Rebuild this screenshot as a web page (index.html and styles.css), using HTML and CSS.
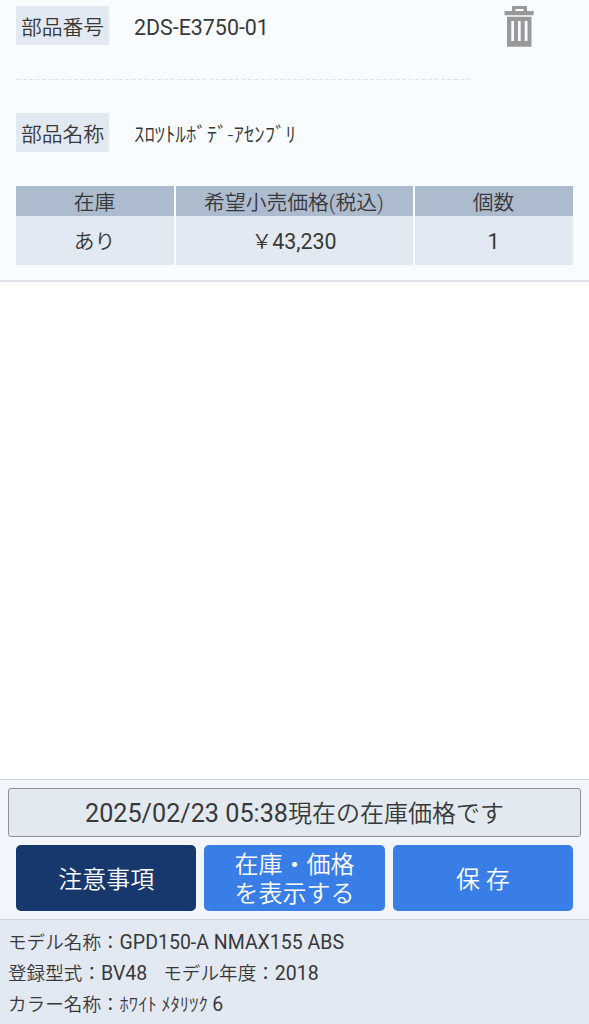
FILE: index.html
```html
<!DOCTYPE html>
<html lang="ja">
<head>
    <meta charset="UTF-8">
    <meta name="viewport" content="width=device-width, initial-scale=1.0">
    <title>部品情報</title>
    <link rel="stylesheet" href="styles.css">
</head>
<body>
    <div class="part">
        <div class="part-head">
            <div class="part-info">
                <div class="row">
                    <span class="label">部品番号</span>
                    <span class="number">2DS-E3750-01</span>
                </div>
                <svg class="dash" width="455" height="1"><path d="M0 .5H455"/></svg>
                <div class="row">
                    <span class="label">部品名称</span>
                    <span class="kana">ｽﾛﾂﾄﾙﾎﾞﾃﾞ-ｱｾﾝﾌﾞﾘ</span>
                </div>
            </div>
            <button class="delete" aria-label="削除">
                <svg width="30" height="42" viewBox="0 0 30 42">
                    <path fill-rule="evenodd" d="M8 5V1Q8 0 9 0H22Q23 0 23 1V5H29.700V9.300H.5V5ZM11.500 3V5H19.500V3Z"/>
                    <path fill-rule="evenodd" d="M3 10.700H27.500V40.700H3ZM7.300 15V35H10V15ZM14 15V35H16.700V15ZM20.700 15V35H23.500V15Z"/>
                </svg>
            </button>
        </div>
        <table>
            <tr>
                <th class="stock">在庫</th>
                <th class="price">希望小売価格(税込)</th>
                <th class="count">個数</th>
            </tr>
            <tr>
                <td>あり</td>
                <td>￥<span class="yen">43,230</span></td>
                <td><span class="yen">1</span></td>
            </tr>
        </table>
    </div>

    <div class="actions">
        <div class="notice"><span class="time">2025/02/23 05:38</span>現在の在庫価格です</div>
        <div class="buttons">
            <button class="btn dark">注意事項</button>
            <button class="btn">在庫・価格<br>を表示する</button>
            <button class="btn">保 存</button>
        </div>
    </div>

    <div class="model">
        <p>モデル名称：<span class="value">GPD150-A NMAX155 ABS</span></p>
        <p>登録型式：<span class="value">BV48</span><span class="year">モデル年度：<span class="value">2018</span></span></p>
        <p>カラー名称：ﾎﾜｲﾄ ﾒﾀﾘﾂｸ <span class="value">6</span></p>
    </div>
</body>
</html>
```

FILE: styles.css
```css
* {
    box-sizing: border-box;
}
body {
    margin: 0;
    height: 1024px;
    display: flex;
    flex-direction: column;
    overflow: hidden;
    font-family: Roboto, "Noto Sans CJK JP", sans-serif;
    font-size: 20.8px;
    font-weight: 350;
    color: #383838;
    background: #fff;
}
button {
    border: none;
    padding: 0;
    font-family: inherit;
    font-weight: inherit;
}
.number, .yen, .time, .value {
    font-weight: 400;
}
.part {
    height: 282px;
    padding: 6px 16px 0;
    background: #f8fcff;
    border-bottom: 2px solid #dfe3e9;
}
.part-head {
    display: flex;
    height: 180px;
}
.part-info {
    width: 455px;
}
.row {
    display: flex;
    align-items: center;
    gap: 25px;
    height: 39px;
    white-space: nowrap;
}
.label {
    width: 93px;
    height: 39px;
    padding-top: 3px;
    line-height: 39px;
    text-align: center;
    background: #e3e9f2;
}
.number {
    padding-top: 3px;
    font-size: 21.4px;
}
.yen {
    font-size: 21.4px;
}
.dash {
    display: block;
    margin: 34px 0 33px;
    stroke: #dde1e5;
    stroke-dasharray: 4 2.44;
}
.delete {
    align-self: flex-start;
    margin-left: 33px;
    background: none;
    line-height: 0;
    fill: #999;
}
table {
    width: 557px;
    table-layout: fixed;
    border-collapse: collapse;
    text-align: center;
}
th, td {
    padding: 0 1px 0 0;
    line-height: 24px;
    border-right: 2px solid #f8fcff;
}
th:last-child, td:last-child {
    border-right: none;
}
th {
    height: 30px;
    padding-top: 3px;
    font-weight: 350;
    background: #adbbcf;
}
td {
    height: 49px;
    padding-top: 3px;
    background: #e3e9f2;
}
.stock {
    width: 159px;
}
.price {
    width: 239px;
}
.actions {
    height: 140px;
    margin-top: auto;
    padding: 8px 8px 0;
    background: #f2f5fb;
    border-top: 1px solid #cdd2d8;
}
.notice {
    height: 49px;
    line-height: 49px;
    font-size: 24px;
    text-align: center;
    border: 1px solid #8e9297;
    border-radius: 3px;
    background: #e3e9f1;
}
.time {
    font-size: 25.2px;
}
.buttons {
    display: grid;
    grid-template-columns: repeat(3, 1fr);
    gap: 8px;
    padding: 8px 8px 0;
}
.btn {
    height: 66px;
    padding-top: 4px;
    border-radius: 5px;
    background: #387ee6;
    color: #fff;
    font-size: 24px;
    line-height: 29px;
}
.dark {
    background: #17386d;
}
.model {
    height: 105px;
    padding: 7px 8px;
    font-size: 18.6px;
    line-height: 31px;
    background: #e3e9f2;
    border-top: 1px solid #c9d1de;
}
.model p {
    margin: 0;
    height: 31px;
}
.value {
    font-size: 19.5px;
}
.year {
    margin-left: 16px;
}
```
